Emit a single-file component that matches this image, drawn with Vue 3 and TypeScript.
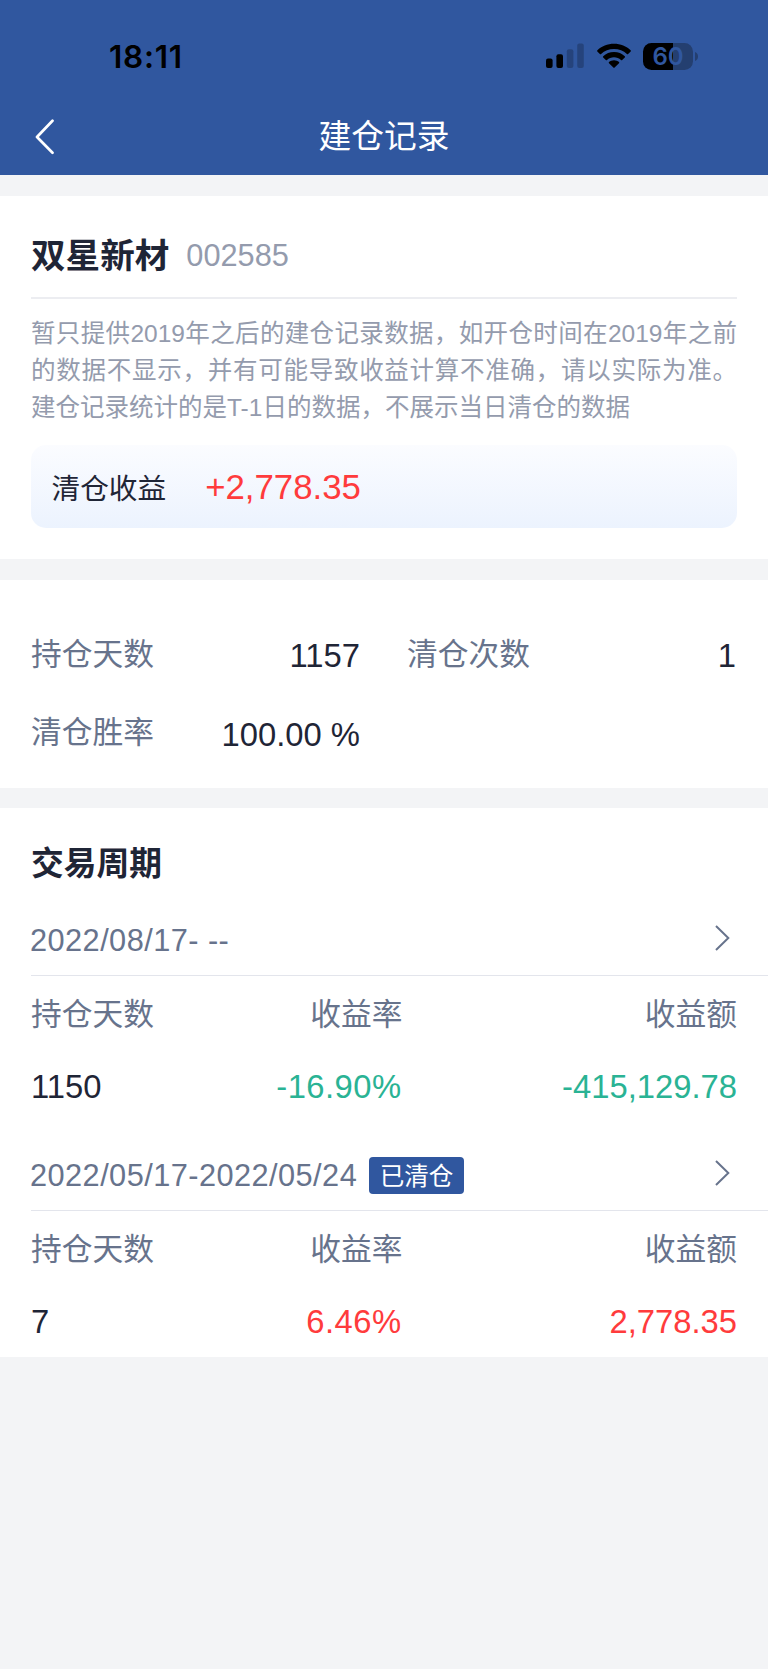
<script setup lang="ts">
interface CycleRecord {
  period: string
  open: boolean
  days: string
  rate: string
  amount: string
  trend: 'up' | 'down'
}

const stock = { name: '双星新材', code: '002585' }

const notice =
  '暂只提供2019年之后的建仓记录数据，如开仓时间在2019年之前的数据不显示，并有可能导致收益计算不准确，请以实际为准。建仓记录统计的是T-1日的数据，不展示当日清仓的数据'

const stats: { label: string; value: string }[] = [
  { label: '持仓天数', value: '1157' },
  { label: '清仓次数', value: '1' },
  { label: '清仓胜率', value: '100.00 %' },
]

const records: CycleRecord[] = [
  { period: '2022/08/17- --', open: true, days: '1150', rate: '-16.90%', amount: '-415,129.78', trend: 'down' },
  { period: '2022/05/17-2022/05/24', open: false, days: '7', rate: '6.46%', amount: '2,778.35', trend: 'up' },
]
</script>

<template>
  <div class="page">
    <header class="top">
      <div class="status">
        <span class="clock">18:11</span>
        <div class="indicators">
          <svg class="signal" width="39" height="26" viewBox="0 0 39 26">
            <rect x="0" y="15.4" width="6.6" height="9.6" rx="2" />
            <rect x="10.4" y="11.2" width="6.6" height="13.8" rx="2" />
            <rect x="20.8" y="6.2" width="6.6" height="18.8" rx="2" opacity=".22" />
            <rect x="31.2" y="0.6" width="6.6" height="24.4" rx="2" opacity=".22" />
          </svg>
          <svg class="wifi" width="34" height="26" viewBox="0 0 34 26">
            <path d="M17 .7C23.500 .7 29.500 3.200 33.600 7.200C34 7.600 34 8 33.700 8.400L31.100 11C30.800 11.300 30.300 11.300 29.900 11C26.500 7.800 22 6 17 6S7.500 7.800 4.100 11C3.700 11.300 3.200 11.300 2.900 11L.3 8.400C0 8 0 7.600 .4 7.200C4.500 3.200 10.500 .7 17 .7Z" />
            <path d="M17 9.100C21.200 9.100 25 10.700 27.800 13.200C28.200 13.600 28.200 14.100 27.800 14.400L25.200 17C24.900 17.300 24.400 17.300 24 17C22.100 15.300 19.700 14.300 17 14.300S11.900 15.300 10 17C9.600 17.300 9.100 17.300 8.800 17L6.200 14.400C5.800 14.100 5.800 13.600 6.200 13.200C9 10.700 12.800 9.100 17 9.100Z" />
            <path d="M17 17.200C18.900 17.200 20.700 17.900 22 19C22.400 19.400 22.400 19.800 22 20.200L17.600 24.600C17.300 25 16.700 25 16.400 24.600L12 20.200C11.600 19.800 11.600 19.400 12 19C13.300 17.900 15.100 17.200 17 17.200Z" />
          </svg>
          <div class="battery">
            <span class="level">60</span>
            <svg class="nub" width="3" height="9" viewBox="0 0 3 9"><path d="M0 0Q3 1.300 3 4.500T0 9Z" /></svg>
          </div>
        </div>
      </div>
      <div class="nav">
        <svg class="back" width="20" height="36" viewBox="0 0 20 36">
          <path d="M17.500 1.800L2 18L17.500 33.800" />
        </svg>
        <h1>建仓记录</h1>
      </div>
    </header>

    <section class="card summary">
      <div class="stock">
        <h2>{{ stock.name }}</h2>
        <span class="code">{{ stock.code }}</span>
      </div>
      <p class="notice">{{ notice }}</p>
      <div class="profit">
        <span class="profit-label">清仓收益</span>
        <span class="profit-value">+2,778.35</span>
      </div>
    </section>

    <section class="card stats">
      <div v-for="s in stats" :key="s.label" class="stat">
        <span class="label">{{ s.label }}</span>
        <span class="value">{{ s.value }}</span>
      </div>
    </section>

    <section class="card cycles">
      <h3>交易周期</h3>
      <article v-for="r in records" :key="r.period" class="record">
        <div class="period">
          <span class="dates">{{ r.period }}</span>
          <span v-if="!r.open" class="tag">已清仓</span>
          <svg class="more" width="16" height="28" viewBox="0 0 16 28">
            <path d="M2 2L14.300 14L2 26" />
          </svg>
        </div>
        <div class="cells heads">
          <span>持仓天数</span><span>收益率</span><span>收益额</span>
        </div>
        <div class="cells figures" :class="r.trend">
          <span>{{ r.days }}</span><span class="rate">{{ r.rate }}</span><span class="amount">{{ r.amount }}</span>
        </div>
      </article>
    </section>
  </div>
</template>

<style>
body {
  background: #f3f4f6;
}
</style>

<style scoped>
.page {
  min-height: 1669px;
  background: #f3f4f6;
  color: #1f2536;
  font-family: 'Liberation Sans', 'Noto Sans CJK SC', sans-serif;
  line-height: 1.2;
}
h1,
h2,
h3,
p {
  margin: 0;
}
.top {
  height: 175px;
  background: #30579f;
}
.status {
  display: flex;
  justify-content: space-between;
  height: 98px;
  padding: 0 70px 0 109px;
  box-sizing: border-box;
}
.clock {
  margin-top: 37px;
  font: 600 31.500px/40px Inter, sans-serif;
  letter-spacing: 0.700px;
  color: #000;
}
.indicators {
  display: flex;
  align-items: flex-start;
  padding-top: 43px;
}
.wifi {
  margin-left: 12px;
}
.battery {
  display: flex;
  align-items: center;
  gap: 2px;
  margin-left: 12.500px;
}
.level {
  width: 50px;
  height: 27px;
  border-radius: 8.500px;
  background: linear-gradient(90deg, #000 60%, #243f70 60%);
  color: #30579f;
  font: 600 24px/27px Inter, sans-serif;
  text-align: center;
}
.nub {
  fill: #243f70;
}
.nav {
  display: grid;
  grid-template-columns: 60px 1fr 60px;
  align-items: center;
  height: 77px;
  padding: 0 35px;
}
.back path {
  fill: none;
  stroke: #fff;
  stroke-width: 2.700;
  stroke-linecap: round;
  stroke-linejoin: round;
}
.nav h1 {
  padding-top: 1px;
  color: #fff;
  font-size: 32.770px;
  line-height: 48px;
  font-weight: 400;
  text-align: center;
}
.card {
  background: #fff;
  box-sizing: border-box;
}
.summary {
  height: 363px;
  margin-top: 21px;
  padding: 0 31px;
}
.stock {
  display: flex;
  align-items: center;
  gap: 17px;
  height: 101px;
  padding-top: 18px;
  box-sizing: border-box;
  box-shadow: 0 2px #ecedf1;
}
.stock h2 {
  padding-top: 1px;
  font-size: 34.600px;
  line-height: 48px;
  font-weight: 700;
}
.code {
  padding-top: 2px;
  color: #949bad;
  font-size: 30.720px;
}
.notice {
  margin-top: 19px;
  color: #949bad;
  font-size: 24.500px;
  line-height: 36.860px;
  text-align: justify;
}
.profit {
  display: flex;
  align-items: center;
  height: 83px;
  margin-top: 18.500px;
  padding-left: 20.500px;
  border-radius: 15px;
  background: linear-gradient(#fbfcff, #ecf3fe);
}
.profit-label {
  padding-top: 5px;
  font-size: 28.670px;
}
.profit-value {
  margin-left: 39px;
  color: #ff3b3c;
  font-size: 34.800px;
}
.stats {
  display: grid;
  grid-template-columns: 1fr 1fr;
  grid-auto-rows: 78.500px;
  column-gap: 46px;
  height: 208px;
  margin-top: 21px;
  padding: 34px 31px 0;
}
.stat {
  display: flex;
  align-items: center;
  justify-content: space-between;
}
.label {
  padding-top: 4px;
  color: #67738c;
  font-size: 30.720px;
}
.value {
  padding: 5px 1px 0 0;
  font-size: 32.770px;
}
.cycles {
  height: 549px;
  margin-top: 20px;
  padding-left: 31px;
}
.cycles h3 {
  height: 97px;
  font-size: 32.770px;
  line-height: 112px;
  font-weight: 700;
}
.record + .record {
  margin-top: 18px;
}
.period {
  display: flex;
  align-items: center;
  height: 71px;
  padding-right: 38px;
  box-sizing: border-box;
  border-bottom: 1px solid #e3e5ec;
  color: #67738c;
}
.dates {
  margin-left: -1px;
  padding-top: 2px;
  font-size: 30.720px;
  letter-spacing: 0.450px;
}
.tag {
  height: 37px;
  margin-left: 12px;
  padding: 0 10.500px;
  border-radius: 4px;
  background: #30579f;
  color: #fff;
  font-size: 24.580px;
  line-height: 39px;
}
.more {
  margin: 0 0 4px auto;
}
.more path {
  fill: none;
  stroke: #67738c;
  stroke-width: 2;
}
.cells {
  display: grid;
  grid-template-columns: 186px 185.500px 334.500px;
  align-items: center;
}
.cells span + span {
  text-align: right;
}
.heads {
  height: 76px;
  padding-top: 3px;
  box-sizing: border-box;
  color: #67738c;
  font-size: 30.720px;
}
.figures {
  height: 70px;
  font-size: 32.770px;
}
.rate {
  padding-right: 1px;
  letter-spacing: 0.450px;
}
.up span + span {
  color: #ff3b3c;
}
.down span + span {
  color: #2ab394;
}
</style>
